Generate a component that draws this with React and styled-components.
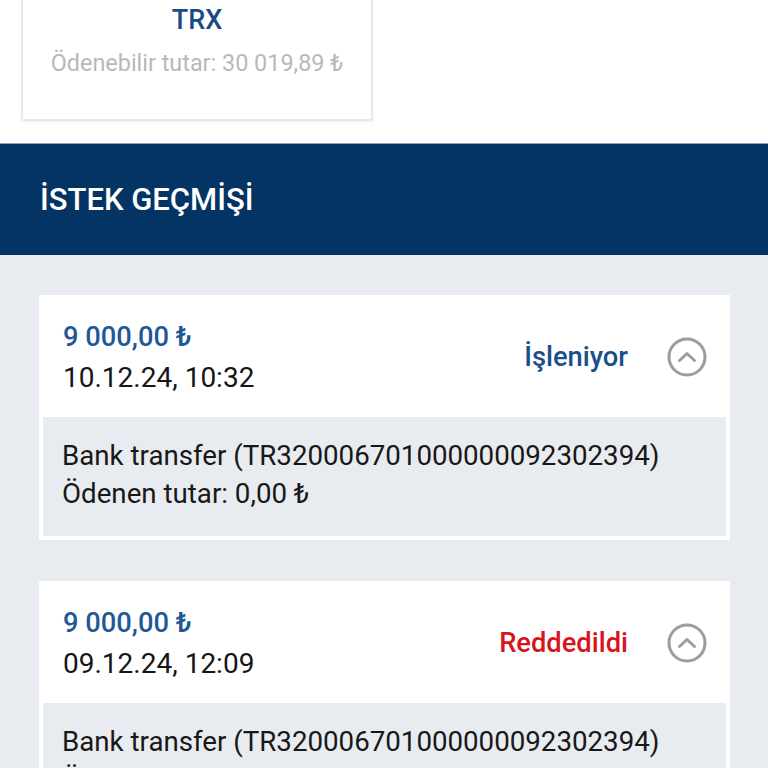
import React from "react";
import styled, { createGlobalStyle } from "styled-components";

const Global = createGlobalStyle`
  html, body { margin: 0; padding: 0; background: #ffffff; }
  body { font-family: Roboto, "Noto Sans", "Liberation Sans", sans-serif; -webkit-font-smoothing: antialiased; }
  * { box-sizing: border-box; }
`;

const Page = styled.div`
  width: 768px;
  min-height: 768px;
  overflow: hidden;
`;

const TopArea = styled.section`
  background: #ffffff;
  padding: 0 395px 22px 21px;
`;

const AssetCard = styled.div`
  background: #ffffff;
  border: 2px solid #e6e8eb;
  border-top: none;
  box-shadow: 0 1px 2px rgba(0, 0, 0, 0.06);
  padding: 2px 0 31px;
  display: flex;
  flex-direction: column;
  align-items: center;
`;

const AssetName = styled.div`
  color: #1a4b87;
  font-size: 27px;
  font-weight: 500;
  line-height: 36px;
`;

const AssetHint = styled.div`
  color: #b8b8b8;
  font-size: 23.4px;
  line-height: 50px;
  white-space: nowrap;
`;

const SectionBar = styled.header`
  background: #033463;
  border-top: 1px solid #8aa3bb;
  height: 112px;
  display: flex;
  align-items: center;
  padding-left: 40px;
`;

const SectionTitle = styled.h2`
  margin: 0;
  color: #ffffff;
  font-size: 31px;
  font-weight: 500;
`;

const HistoryArea = styled.main`
  background: #e8ebef;
  padding: 40px 38px 40px 39px;
  display: flex;
  flex-direction: column;
  gap: 41px;
`;

const RequestCard = styled.article`
  background: #ffffff;
  padding: 0 4px 4px;
  display: flex;
  flex-direction: column;
`;

const CardHead = styled.div`
  height: 122px;
  display: flex;
  align-items: center;
  padding: 0 19px 0 20px;
`;

const HeadInfo = styled.div`
  flex: 1;
  display: flex;
  flex-direction: column;
  padding-top: 8px;
`;

const Amount = styled.div`
  color: #1f5896;
  font-size: 27.3px;
  font-weight: 500;
  line-height: 36px;
`;

const DateText = styled.div`
  color: #161616;
  font-size: 28px;
  line-height: 46px;
`;

const Status = styled.div`
  color: ${(p) => (p.$tone === "rejected" ? "#d8141d" : "#1b4f8a")};
  font-size: 27.3px;
  font-weight: 500;
  margin-right: 39px;
  padding-top: 2px;
`;

const ToggleIcon = styled.svg`
  width: 40px;
  height: 40px;
  flex: none;
  margin-top: 2px;
`;

const Details = styled.div`
  background: #e8ebef;
  padding: 20px 20px 23px 19px;
  color: #181818;
  font-size: 27.7px;
  line-height: 38px;
`;

const DetailLine = styled.div`
  white-space: nowrap;
`;

const Chevron = () => (
  <ToggleIcon viewBox="0 0 40 40" aria-hidden="true">
    <circle cx="20" cy="20" r="18" fill="none" stroke="#9c9c9c" strokeWidth="3" />
    <path d="M12.5 23.5 L20 16.5 L27.5 23.5" fill="none" stroke="#9c9c9c" strokeWidth="3" strokeLinecap="round" strokeLinejoin="round" />
  </ToggleIcon>
);

const requests = [
  { amount: "9 000,00 ₺", date: "10.12.24, 10:32", status: "İşleniyor", tone: "pending" },
  { amount: "9 000,00 ₺", date: "09.12.24, 12:09", status: "Reddedildi", tone: "rejected" },
];

export default function App() {
  return (
    <Page>
      <Global />
      <TopArea>
        <AssetCard>
          <AssetName>TRX</AssetName>
          <AssetHint>Ödenebilir tutar: 30 019,89 ₺</AssetHint>
        </AssetCard>
      </TopArea>
      <SectionBar>
        <SectionTitle>İSTEK GEÇMİŞİ</SectionTitle>
      </SectionBar>
      <HistoryArea>
        {requests.map((r, i) => (
          <RequestCard key={i}>
            <CardHead>
              <HeadInfo>
                <Amount>{r.amount}</Amount>
                <DateText>{r.date}</DateText>
              </HeadInfo>
              <Status $tone={r.tone}>{r.status}</Status>
              <Chevron />
            </CardHead>
            <Details>
              <DetailLine>Bank transfer (TR320006701000000092302394)</DetailLine>
              <DetailLine>Ödenen tutar: 0,00 ₺</DetailLine>
            </Details>
          </RequestCard>
        ))}
      </HistoryArea>
    </Page>
  );
}
